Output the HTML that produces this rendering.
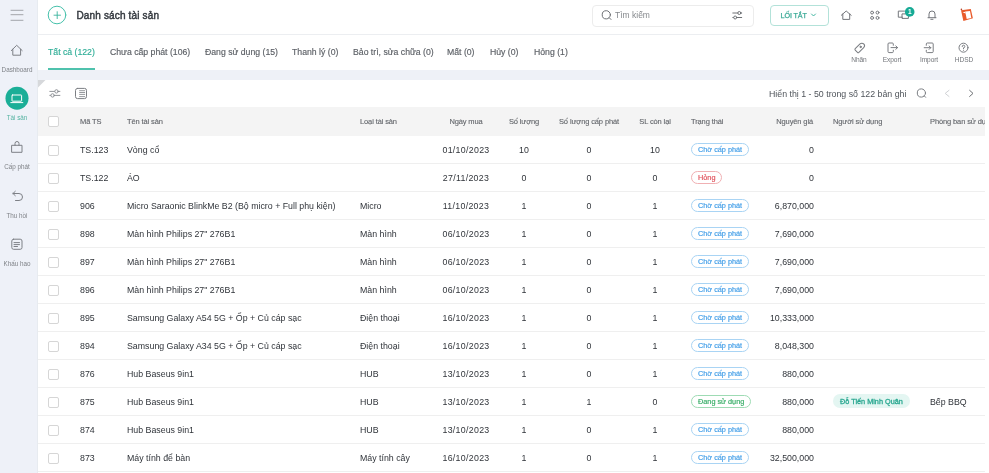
<!DOCTYPE html>
<html><head><meta charset="utf-8"><title>Danh sách tài sản</title>
<style>
*{box-sizing:border-box;margin:0;padding:0}
body{will-change:transform}
html,body{width:989px;height:473px;overflow:hidden;background:#fff;font-family:"Liberation Sans",sans-serif;color:#333;position:relative}
.a{position:absolute;white-space:nowrap}
#side{position:absolute;left:0;top:0;width:38px;height:473px;background:#eef1f8;border-right:1px solid #e7ebf0}
#top{position:absolute;left:38px;top:0;width:951px;height:35px;background:#fff;border-bottom:1px solid #eceef1}
#tabs{position:absolute;left:38px;top:35px;width:951px;height:35px;background:#fff}
#band{position:absolute;left:38px;top:70px;width:951px;height:10px;background:#eef1f7}
#card{position:absolute;left:38px;top:80px;width:951px;height:393px;background:#fff;overflow:hidden}
#thead{position:absolute;left:0;top:27px;width:947px;height:29px;background:#f4f4f4;overflow:hidden}
.row{position:absolute;left:0;width:947px;height:28px;border-bottom:1px solid #efefef}
#card .row{top:0}
.cb{position:absolute;left:10px;top:9px;width:11px;height:11px;border:1px solid #d6d6d6;border-radius:2px;background:#fff}
.c{position:absolute;top:0;height:28px;line-height:29px;font-size:8.8px;color:#30343a;white-space:nowrap}
.cen{text-align:center}
.rt{text-align:right}
.h{position:absolute;top:0;height:29px;line-height:30px;font-size:7.5px;letter-spacing:-0.12px;color:#64676c;-webkit-text-stroke:0.12px #64676c;white-space:nowrap}
.badge{position:absolute;left:653px;top:7px;height:13px;line-height:12px;border:1px solid;border-radius:7px;font-size:7.3px;font-weight:400;-webkit-text-stroke:0.18px currentColor;padding:0 6px;white-space:nowrap}
.cho{color:#46a0e8;border-color:#a9d4f4}
.hong{color:#e0525b;border-color:#f0b0b3}
.dang{color:#36ad66;border-color:#9edbb4}
.ub{position:absolute;left:795px;top:6px;height:14px;line-height:15.5px;border-radius:7px;background:#e4f6f2;color:#2aa891;font-size:7.3px;font-weight:400;-webkit-text-stroke:0.3px currentColor;padding:0 7px;white-space:nowrap}
#search{position:absolute;left:592px;top:4.5px;width:162px;height:22px;border:1px solid #ececec;border-radius:4px;background:#fff}
#btn{position:absolute;left:769.5px;top:4.5px;width:59px;height:21.5px;border:1px solid #b3e2d9;border-radius:4px;background:#fff}
.tab{top:47px;font-size:8.7px;line-height:11px;color:#5c6066;-webkit-text-stroke:0.15px #5c6066}
.tab.act{color:#2fae97;-webkit-text-stroke:0.15px #2fae97}
.st{top:55.5px;font-size:6.6px;line-height:8px;color:#73767b;text-align:center;letter-spacing:-0.1px}
.sb{width:34px;text-align:center;font-size:6.3px;line-height:8px;color:#7f8287}

</style></head><body>
<div id="side"></div>
<div id="top"></div>
<div id="tabs"></div>
<div id="band"></div>
<div class="a t" style="left:76.5px;top:10px;font-size:10px;font-weight:400;-webkit-text-stroke:0.45px #353a40;color:#353a40;letter-spacing:0.15px;line-height:12px">Danh sách tài sản</div>
<div id="search"></div>
<div class="a" style="left:615px;top:10px;font-size:8.5px;line-height:11px;color:#85888c">Tìm kiếm</div>
<div id="btn"></div>
<div class="a" style="left:780.5px;top:9.5px;font-size:7.2px;line-height:11px;color:#3aa996;letter-spacing:-0.1px;-webkit-text-stroke:0.25px #3aa996">LỐI TẮT</div>
<div class="a tab act" style="left:48px">Tất cả (122)</div>
<div class="a tab" style="left:110px">Chưa cấp phát (106)</div>
<div class="a tab" style="left:205px">Đang sử dụng (15)</div>
<div class="a tab" style="left:292px">Thanh lý (0)</div>
<div class="a tab" style="left:353px">Bảo trì, sửa chữa (0)</div>
<div class="a tab" style="left:447px">Mất (0)</div>
<div class="a tab" style="left:490px">Hủy (0)</div>
<div class="a tab" style="left:534px">Hỏng (1)</div>
<div class="a" style="left:48px;top:68px;width:47px;height:2px;background:#4fc2ad"></div>
<div class="a st" style="left:849px;width:20px">Nhãn</div>
<div class="a st" style="left:882px;width:20px">Export</div>
<div class="a st" style="left:919px;width:20px">Import</div>
<div class="a st" style="left:954px;width:20px">HDSD</div>
<div class="a sb" style="left:0;top:65.5px">Dashboard</div>
<div class="a sb" style="left:0;top:113.5px;color:#55b3a2">Tài sản</div>
<div class="a sb" style="left:0;top:162.5px">Cấp phát</div>
<div class="a sb" style="left:0;top:211.5px">Thu hồi</div>
<div class="a sb" style="left:0;top:259.5px">Khấu hao</div>

<div id="card">
<div id="thead">
<i class="cb"></i>
<span class="h" style="left:42px">Mã TS</span>
<span class="h" style="left:89px">Tên tài sản</span>
<span class="h" style="left:322px">Loại tài sản</span>
<span class="h cen" style="left:388px;width:80px">Ngày mua</span>
<span class="h cen" style="left:456px;width:60px">Số lượng</span>
<span class="h cen" style="left:511px;width:80px">Số lượng cấp phát</span>
<span class="h cen" style="left:587px;width:60px">SL còn lại</span>
<span class="h" style="left:653px">Trạng thái</span>
<span class="h rt" style="left:675px;width:100px">Nguyên giá</span>
<span class="h" style="left:795px">Người sử dụng</span>
<span class="h" style="left:892px">Phòng ban sử dụng</span>
</div>
<div class="a" style="left:731px;top:8px;font-size:8.8px;line-height:12px;color:#50555b">Hiển thị 1 - 50 trong số 122 bản ghi</div>

<div class="row" style="top:56px"><i class="cb"></i><span class="c" style="left:42px">TS.123</span><span class="c" style="left:89px">Vòng cổ</span><span class="c cen" style="left:388px;width:80px;letter-spacing:0.3px">01/10/2023</span><span class="c cen" style="left:456px;width:60px">10</span><span class="c cen" style="left:511px;width:80px">0</span><span class="c cen" style="left:587px;width:60px">10</span><span class="badge cho">Chờ cấp phát</span><span class="c rt" style="left:676px;width:100px">0</span></div><div class="row" style="top:84px"><i class="cb"></i><span class="c" style="left:42px">TS.122</span><span class="c" style="left:89px">ÁO</span><span class="c cen" style="left:388px;width:80px;letter-spacing:0.3px">27/11/2023</span><span class="c cen" style="left:456px;width:60px">0</span><span class="c cen" style="left:511px;width:80px">0</span><span class="c cen" style="left:587px;width:60px">0</span><span class="badge hong">Hỏng</span><span class="c rt" style="left:676px;width:100px">0</span></div><div class="row" style="top:112px"><i class="cb"></i><span class="c" style="left:42px">906</span><span class="c" style="left:89px">Micro Saraonic BlinkMe B2 (Bộ micro + Full phụ kiện)</span><span class="c" style="left:322px">Micro</span><span class="c cen" style="left:388px;width:80px;letter-spacing:0.3px">11/10/2023</span><span class="c cen" style="left:456px;width:60px">1</span><span class="c cen" style="left:511px;width:80px">0</span><span class="c cen" style="left:587px;width:60px">1</span><span class="badge cho">Chờ cấp phát</span><span class="c rt" style="left:676px;width:100px">6,870,000</span></div><div class="row" style="top:140px"><i class="cb"></i><span class="c" style="left:42px">898</span><span class="c" style="left:89px">Màn hình Philips 27" 276B1</span><span class="c" style="left:322px">Màn hình</span><span class="c cen" style="left:388px;width:80px;letter-spacing:0.3px">06/10/2023</span><span class="c cen" style="left:456px;width:60px">1</span><span class="c cen" style="left:511px;width:80px">0</span><span class="c cen" style="left:587px;width:60px">1</span><span class="badge cho">Chờ cấp phát</span><span class="c rt" style="left:676px;width:100px">7,690,000</span></div><div class="row" style="top:168px"><i class="cb"></i><span class="c" style="left:42px">897</span><span class="c" style="left:89px">Màn hình Philips 27" 276B1</span><span class="c" style="left:322px">Màn hình</span><span class="c cen" style="left:388px;width:80px;letter-spacing:0.3px">06/10/2023</span><span class="c cen" style="left:456px;width:60px">1</span><span class="c cen" style="left:511px;width:80px">0</span><span class="c cen" style="left:587px;width:60px">1</span><span class="badge cho">Chờ cấp phát</span><span class="c rt" style="left:676px;width:100px">7,690,000</span></div><div class="row" style="top:196px"><i class="cb"></i><span class="c" style="left:42px">896</span><span class="c" style="left:89px">Màn hình Philips 27" 276B1</span><span class="c" style="left:322px">Màn hình</span><span class="c cen" style="left:388px;width:80px;letter-spacing:0.3px">06/10/2023</span><span class="c cen" style="left:456px;width:60px">1</span><span class="c cen" style="left:511px;width:80px">0</span><span class="c cen" style="left:587px;width:60px">1</span><span class="badge cho">Chờ cấp phát</span><span class="c rt" style="left:676px;width:100px">7,690,000</span></div><div class="row" style="top:224px"><i class="cb"></i><span class="c" style="left:42px">895</span><span class="c" style="left:89px">Samsung Galaxy A54 5G + Ốp + Củ cáp sạc</span><span class="c" style="left:322px">Điện thoại</span><span class="c cen" style="left:388px;width:80px;letter-spacing:0.3px">16/10/2023</span><span class="c cen" style="left:456px;width:60px">1</span><span class="c cen" style="left:511px;width:80px">0</span><span class="c cen" style="left:587px;width:60px">1</span><span class="badge cho">Chờ cấp phát</span><span class="c rt" style="left:676px;width:100px">10,333,000</span></div><div class="row" style="top:252px"><i class="cb"></i><span class="c" style="left:42px">894</span><span class="c" style="left:89px">Samsung Galaxy A34 5G + Ốp + Củ cáp sạc</span><span class="c" style="left:322px">Điện thoại</span><span class="c cen" style="left:388px;width:80px;letter-spacing:0.3px">16/10/2023</span><span class="c cen" style="left:456px;width:60px">1</span><span class="c cen" style="left:511px;width:80px">0</span><span class="c cen" style="left:587px;width:60px">1</span><span class="badge cho">Chờ cấp phát</span><span class="c rt" style="left:676px;width:100px">8,048,300</span></div><div class="row" style="top:280px"><i class="cb"></i><span class="c" style="left:42px">876</span><span class="c" style="left:89px">Hub Baseus 9in1</span><span class="c" style="left:322px">HUB</span><span class="c cen" style="left:388px;width:80px;letter-spacing:0.3px">13/10/2023</span><span class="c cen" style="left:456px;width:60px">1</span><span class="c cen" style="left:511px;width:80px">0</span><span class="c cen" style="left:587px;width:60px">1</span><span class="badge cho">Chờ cấp phát</span><span class="c rt" style="left:676px;width:100px">880,000</span></div><div class="row" style="top:308px"><i class="cb"></i><span class="c" style="left:42px">875</span><span class="c" style="left:89px">Hub Baseus 9in1</span><span class="c" style="left:322px">HUB</span><span class="c cen" style="left:388px;width:80px;letter-spacing:0.3px">13/10/2023</span><span class="c cen" style="left:456px;width:60px">1</span><span class="c cen" style="left:511px;width:80px">1</span><span class="c cen" style="left:587px;width:60px">0</span><span class="badge dang">Đang sử dụng</span><span class="c rt" style="left:676px;width:100px">880,000</span><span class="ub">Đỗ Tiến Minh Quân</span><span class="c" style="left:892px">Bếp BBQ</span></div><div class="row" style="top:336px"><i class="cb"></i><span class="c" style="left:42px">874</span><span class="c" style="left:89px">Hub Baseus 9in1</span><span class="c" style="left:322px">HUB</span><span class="c cen" style="left:388px;width:80px;letter-spacing:0.3px">13/10/2023</span><span class="c cen" style="left:456px;width:60px">1</span><span class="c cen" style="left:511px;width:80px">0</span><span class="c cen" style="left:587px;width:60px">1</span><span class="badge cho">Chờ cấp phát</span><span class="c rt" style="left:676px;width:100px">880,000</span></div><div class="row" style="top:364px"><i class="cb"></i><span class="c" style="left:42px">873</span><span class="c" style="left:89px">Máy tính để bàn</span><span class="c" style="left:322px">Máy tính cây</span><span class="c cen" style="left:388px;width:80px;letter-spacing:0.3px">16/10/2023</span><span class="c cen" style="left:456px;width:60px">1</span><span class="c cen" style="left:511px;width:80px">0</span><span class="c cen" style="left:587px;width:60px">1</span><span class="badge cho">Chờ cấp phát</span><span class="c rt" style="left:676px;width:100px">32,500,000</span></div>
</div>
<svg class="a" style="left:0;top:0;z-index:5" width="989" height="473" viewBox="0 0 989 473" fill="none" stroke-linecap="round" stroke-linejoin="round">
<!-- sidebar -->
<g stroke="#9a9da2" stroke-width="0.9"><path d="M11 10.3H23M11 14.7H23M11 20.3H23"/></g>
<g stroke="#7d8086" stroke-width="1">
<path d="M11.3 50.6L16.7 45.3L22.2 50.6M12.8 49.2V55.2H20.6V49.2"/>
<path d="M12 145.3H22V152.3H12Z M15 145.3V143.5A2 2 0 0 1 19 143.5V145.3"/>
<path d="M13 193.5H19A3.5 3.5 0 0 1 19 200.5H15.5M13 193.5L15.3 191.3M13 193.5L15.3 195.7"/>
<rect x="11.8" y="239.2" width="10.2" height="10.1" rx="1.8"/>
<path d="M14 242.6H19.5M14 244.6H19.5M14 246.5H17.5"/>
</g>
<circle cx="17" cy="98.2" r="11.5" fill="#1aae97" stroke="none"/>
<g stroke="#fff" stroke-width="1"><rect x="12" y="95" width="9.6" height="6.2" rx="0.5"/><path d="M10.8 102.6H22.8"/></g>
<!-- header -->
<circle cx="57" cy="15" r="8.8" stroke="#46c1ab" stroke-width="1"/>
<path d="M54 15.2H60.5M57.2 11.7V18.6" stroke="#3ab39d" stroke-width="0.9"/>
<g stroke="#6e7175" stroke-width="1">
<circle cx="606.3" cy="14.8" r="4.1"/><path d="M609.3 17.8L611 19.5"/>
<path d="M732.8 13H741.7M732.8 17.5H741.7"/>
</g>
<g stroke="#6e7175" stroke-width="1" fill="#fff"><circle cx="739.3" cy="13" r="1.5"/><circle cx="735.2" cy="17.5" r="1.5"/></g>
<path d="M811.5 14L813.5 16L815.5 14" stroke="#2fae97" stroke-width="0.9"/>
<g stroke="#74777c" stroke-width="1">
<path d="M841.3 15.3L846.2 11L851.2 15.3M842.8 14V19.4H849.7V14"/>
<circle cx="872.1" cy="12.6" r="1.45"/><circle cx="877.5" cy="12.6" r="1.45"/><circle cx="872.1" cy="17.9" r="1.45"/><circle cx="877.5" cy="17.9" r="1.45"/>
<path d="M904.5 11.1H898.3V17.2H902.4M902.4 13.9H908.4V18.4H902.4Z"/>
<path d="M928 17.7H936M929 17.7V14A3 3 0 0 1 935 14V17.7M930.8 19.3H933"/>
</g>
<circle cx="909.7" cy="11.9" r="4.8" fill="#17aa95" stroke="none"/>
<text x="909.7" y="14.3" font-family="Liberation Sans" font-size="6.5" font-weight="700" fill="#fff" stroke="none" text-anchor="middle">1</text>
<path d="M961 10.2L970.8 9.1L972.9 18.3L963.4 21.1Z M965.2 11.6L970 10.9L971.3 18L966.7 18.9Z" fill="#e95b2c" fill-rule="evenodd" stroke="none"/>
<path d="M962.6 12.2L965.3 11.7L965.6 13.6Z" fill="#fff" stroke="none"/>
<circle cx="961.4" cy="9.4" r="0.8" fill="#b9442a" stroke="none"/>
<!-- tab toolbar icons -->
<g stroke="#7a7d82" stroke-width="1">
<g transform="rotate(45 859.6 48)"><path d="M857 44.8A2.6 2.6 0 0 1 862.2 44.8V51.6Q862.2 52.6 861.2 52.6H858Q857 52.6 857 51.6Z"/></g>
<circle cx="860.6" cy="46.9" r="0.7" fill="#7a7d82"/>
<path d="M893.3 45.3V44Q893.3 43 892.3 43H889Q888 43 888 44V51.6Q888 52.6 889 52.6H892.3Q893.3 52.6 893.3 51.6V50.2M891 47.6H897.6M895.8 45.9L897.6 47.6L895.8 49.3"/>
<path d="M926.3 45.3V44Q926.3 43 927.3 43H932.2Q933.2 43 933.2 44V51.6Q933.2 52.6 932.2 52.6H927.3Q926.3 52.6 926.3 51.6V50.2M924.2 47.7H930.8M929.1 46L930.8 47.7L929.1 49.4"/>
<circle cx="963.5" cy="47.7" r="4.5"/>
<path d="M962.2 46.5A1.3 1.3 0 1 1 963.5 47.8V48.6M963.5 50.2V50.3"/>
</g>
<!-- card toolbar -->
<g stroke="#85888d" stroke-width="0.9">
<path d="M49.8 91.4H59.9M49.8 95.4H59.9"/>
</g>
<g stroke="#85888d" stroke-width="0.9" fill="#fff"><circle cx="56.5" cy="91.4" r="1.7"/><circle cx="52.6" cy="95.4" r="1.7"/></g>
<g stroke="#7c7f84" stroke-width="1">
<rect x="75.5" y="88.4" width="11" height="10.2" rx="2"/>
<path d="M79.6 90.7H84.7M79.6 92.5H84.7M79.6 94.4H84.7M79.6 96.6H84.7" stroke-width="0.8"/>
<circle cx="921.4" cy="93" r="4.1"/><path d="M924.3 95.9L925.6 97.3"/>
</g>
<path d="M949 90.3L945.2 93.4L949 96.5" stroke="#d0d2d5" stroke-width="1"/>
<path d="M969.6 90.3L973 93.4L969.6 96.5" stroke="#6e7175" stroke-width="1"/>
<path d="M38 80H45.5L38 87.5Z" fill="#d6d8db" stroke="none"/>
</svg>

</body></html>
